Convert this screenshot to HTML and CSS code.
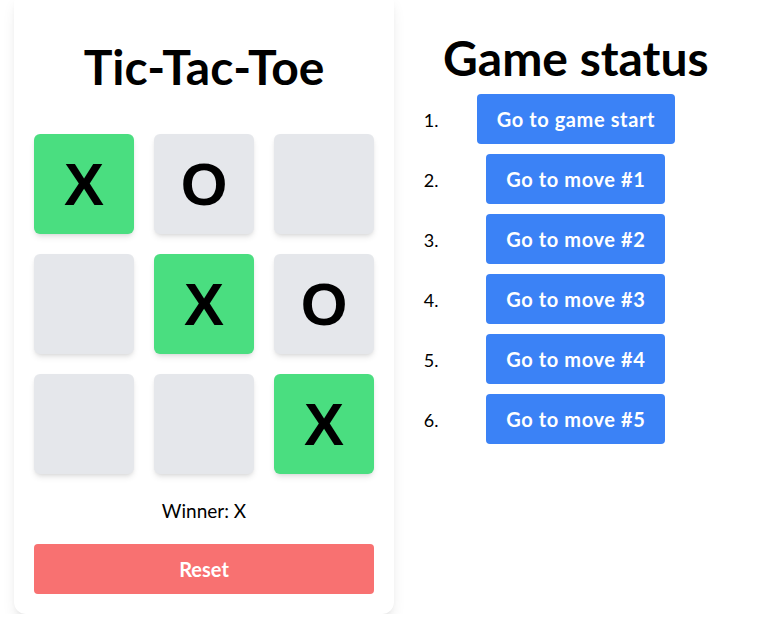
FILE: index.html
```html
<!DOCTYPE html>
<html>
<head>
<meta charset="utf-8">
<link rel="stylesheet" href="styles.css">
</head>
<body>
<div class="app">
  <div class="card">
    <h1 class="title">Tic-Tac-Toe</h1>
    <div class="board">
      <div class="cell win">X</div>
      <div class="cell">O</div>
      <div class="cell"></div>
      <div class="cell"></div>
      <div class="cell win">X</div>
      <div class="cell">O</div>
      <div class="cell"></div>
      <div class="cell"></div>
      <div class="cell win">X</div>
    </div>
    <p class="status">Winner: X</p>
    <button class="reset">Reset</button>
  </div>
  <div class="history">
    <h2 class="history-title">Game status</h2>
    <ol class="moves">
      <li><button class="move">Go to game start</button></li>
      <li><button class="move">Go to move #1</button></li>
      <li><button class="move">Go to move #2</button></li>
      <li><button class="move">Go to move #3</button></li>
      <li><button class="move">Go to move #4</button></li>
      <li><button class="move">Go to move #5</button></li>
    </ol>
  </div>
</div>
</body>
</html>
```
FILE: styles.css
```css
* { box-sizing: border-box; }
body {
  margin: 0;
  background: #fff;
  font-family: "Lato", "Noto Sans", sans-serif;
  color: #000;
}
.app {
  display: flex;
  align-items: flex-start;
  gap: 49px;
  padding-left: 14px;
  margin-top: -9px;
}
.card {
  width: 380px;
  background: #fff;
  border-radius: 12px;
  padding: 20px;
  box-shadow: 0 10px 15px -3px rgba(0,0,0,0.1), 0 4px 6px -4px rgba(0,0,0,0.1);
}
.title {
  margin: 32px 0 43px;
  font-size: 48px;
  line-height: 1;
  font-weight: 700;
  text-align: center;
}
.board {
  display: grid;
  grid-template-columns: repeat(3, 100px);
  grid-auto-rows: 100px;
  gap: 20px;
}
.cell {
  background: #e5e7eb;
  border-radius: 6px;
  box-shadow: 0 4px 6px -1px rgba(0,0,0,0.1), 0 2px 4px -2px rgba(0,0,0,0.1);
  display: flex;
  align-items: center;
  justify-content: center;
  font-family: "Liberation Sans", Arial, sans-serif;
  font-weight: 700;
  font-size: 60px;
}
.cell.win { background: #4ade80; }
.status {
  margin: 23px 0 19px;
  text-align: center;
  font-size: 19px;
  line-height: 28px;
}
.reset {
  display: block;
  width: 100%;
  height: 50px;
  border: 0;
  border-radius: 4px;
  background: #f87171;
  color: #fff;
  font-family: "Lato", sans-serif;
  font-weight: 700;
  font-size: 20px;
}
.history-title {
  margin: 43px 0 12px;
  font-size: 48px;
  line-height: 1;
  font-weight: 700;
}
.moves {
  margin: 0;
  padding: 0;
  list-style-position: outside;
}
.moves li {
  text-align: center;
  margin-bottom: 10px;
  font-size: 18px;
}
.move {
  border: 0;
  border-radius: 4px;
  background: #3b82f6;
  color: #fff;
  font-family: "Lato", sans-serif;
  font-weight: 700;
  font-size: 20px;
  letter-spacing: 0.6px;
  line-height: 28px;
  padding: 11px 20px;
}
```
